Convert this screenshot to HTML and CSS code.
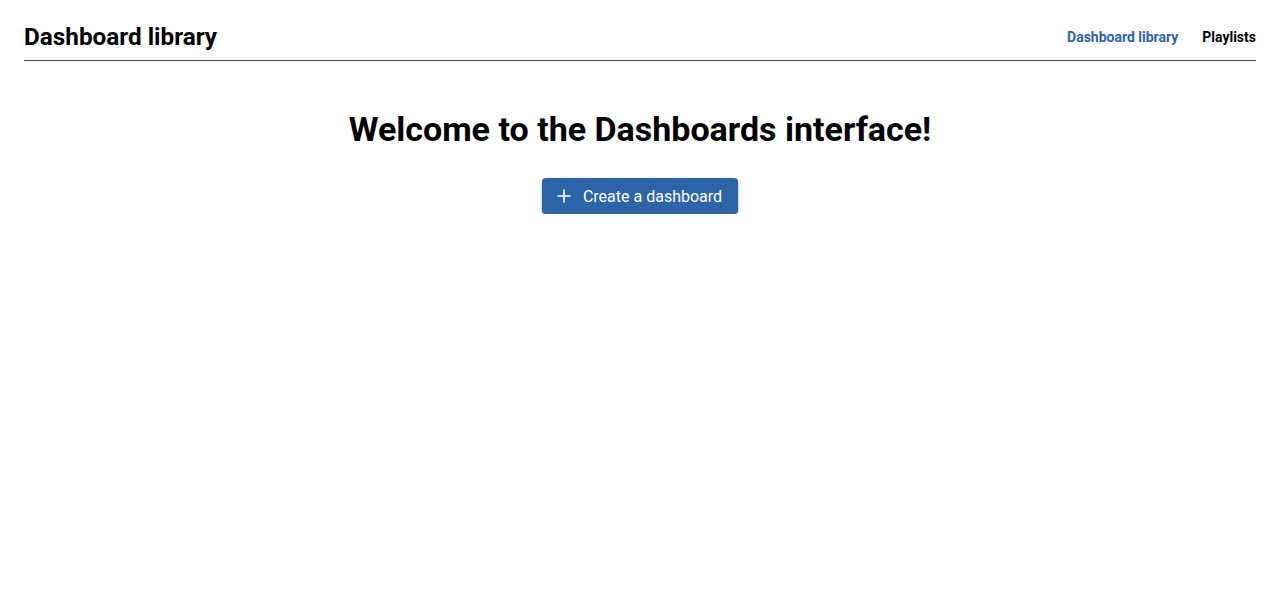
FILE: index.html
```html
<!DOCTYPE html>
<html lang="en">
<head>
<meta charset="utf-8">
<title>Dashboard library</title>
<link rel="stylesheet" href="styles.css">
</head>
<body>
<div class="page">
  <header class="header">
    <h1 class="title">Dashboard library</h1>
    <nav class="nav">
      <a class="nav-link active" href="#">Dashboard library</a>
      <a class="nav-link" href="#">Playlists</a>
    </nav>
  </header>
  <main class="main">
    <h2 class="welcome">Welcome to the Dashboards interface!</h2>
    <button class="create-btn" type="button">
      <svg class="plus" width="14" height="14" viewBox="0 0 14 14" aria-hidden="true"><path d="M7 0.5v13M0.5 7h13" stroke="#fff" stroke-width="1.6" fill="none"/></svg>
      <span>Create a dashboard</span>
    </button>
  </main>
</div>
</body>
</html>
```
FILE: styles.css
```css
* { box-sizing: border-box; }
html, body { margin: 0; padding: 0; background: #fff; }
body { font-family: Roboto, "Noto Sans", sans-serif; color: #000; }
.page { padding: 0 24px; }
.header {
  display: flex;
  align-items: center;
  justify-content: space-between;
  height: 61px;
  padding-top: 14px;
  border-bottom: 1px solid #4a4a4a;
}
.title { margin: 0; font-size: 24.3px; font-weight: 700; line-height: 1; }
.nav { display: flex; gap: 24px; }
.nav-link { font-size: 14px; font-weight: 700; color: #000; text-decoration: none; }
.nav-link.active { color: #2d64ab; }
.main { display: flex; flex-direction: column; align-items: center; padding-top: 48px; }
.welcome { margin: 0; font-size: 34px; font-weight: 700; line-height: 40px; }
.create-btn {
  margin-top: 29px;
  display: flex;
  align-items: center;
  gap: 12px;
  height: 36px;
  padding: 0 16px 0 15px;
  background: #2d64a8;
  color: #fff;
  border: none;
  border-radius: 4px;
  font-family: Roboto, sans-serif;
  font-size: 16px;
  box-shadow: 0 1px 3px rgba(0,0,0,0.35);
}
.plus { display: block; }
```
